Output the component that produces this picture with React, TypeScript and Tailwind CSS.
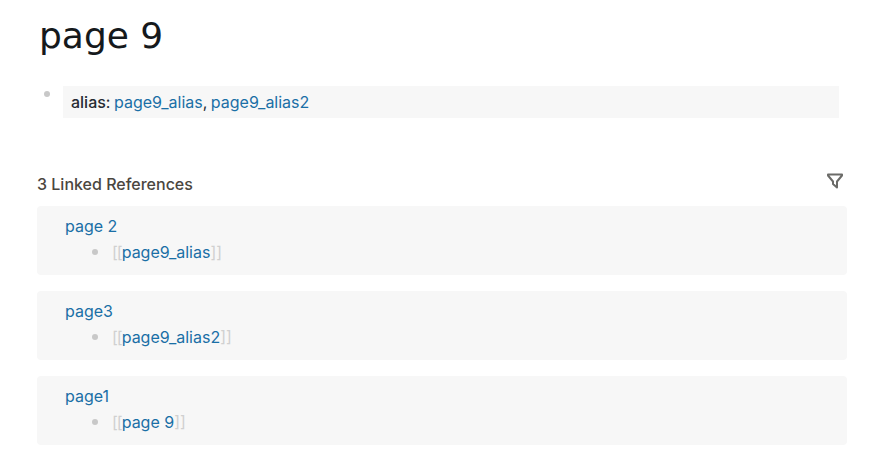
const linkColor = 'text-[#1a6fa6]'

const refs = [
  { page: 'page 2', target: 'page9_alias' },
  { page: 'page3', target: 'page9_alias2' },
  { page: 'page1', target: 'page 9' },
]

function FilterIcon() {
  return (
    <svg width="18" height="18" viewBox="0 0 18 18" fill="none" stroke="#6b6b68" strokeWidth="2" strokeLinejoin="round" strokeLinecap="round">
      <path d="M2 2.5h14v1l-5 6v6l-4-3.5V9.5l-5-6z" />
    </svg>
  )
}

function RefCard({ page, target }: { page: string; target: string }) {
  return (
    <div className="h-[69px] rounded bg-[#f7f7f7] pl-[28px] pt-[9px] text-base leading-[22px]">
      <div className={linkColor}>{page}</div>
      <div className="mt-[4px] flex items-center pl-[27px]">
        <span className="h-[6px] w-[6px] rounded-full bg-[#c8c8c8]" />
        <span className="ml-[14px] text-[#d0d0d0]">
          <span className="tracking-[-1px]">[[</span>
          <span className={linkColor}>{target}</span>
          <span>]]</span>
        </span>
      </div>
    </div>
  )
}

export default function App() {
  return (
    <div className="h-[471px] w-[871px] overflow-hidden bg-white pl-[37px] pr-[24px] font-['Inter',sans-serif]">
      <h1 className="pl-[2px] pt-[13px] font-['DejaVu_Sans',sans-serif] text-[36px] leading-[45px] text-[#15191c]">page 9</h1>
      <div className="mt-[28px] flex items-start pr-[8px]">
        <span className="ml-[7px] mt-[5px] h-[6px] w-[6px] rounded-full bg-[#c8c8c8]" />
        <div className="ml-[13px] h-[32px] flex-1 bg-[#f7f7f7] pl-[8px] text-base leading-[32px] text-[#262b33] [word-spacing:-1px]">
          <span className="font-medium">alias</span>: <span className={linkColor}>page9_alias</span>, <span className={linkColor}>page9_alias2</span>
        </div>
      </div>
      <div className="mt-[50px] flex h-[38px] items-start justify-between pr-[2px]">
        <span className="pt-[6px] text-base font-medium leading-[20px] text-[#4a4640]">3 Linked References</span>
        <span className="mr-[1px] mt-[4px]"><FilterIcon /></span>
      </div>
      <div className="flex flex-col gap-[16px]">
        {refs.map((r) => (
          <RefCard key={r.page} page={r.page} target={r.target} />
        ))}
      </div>
    </div>
  )
}
